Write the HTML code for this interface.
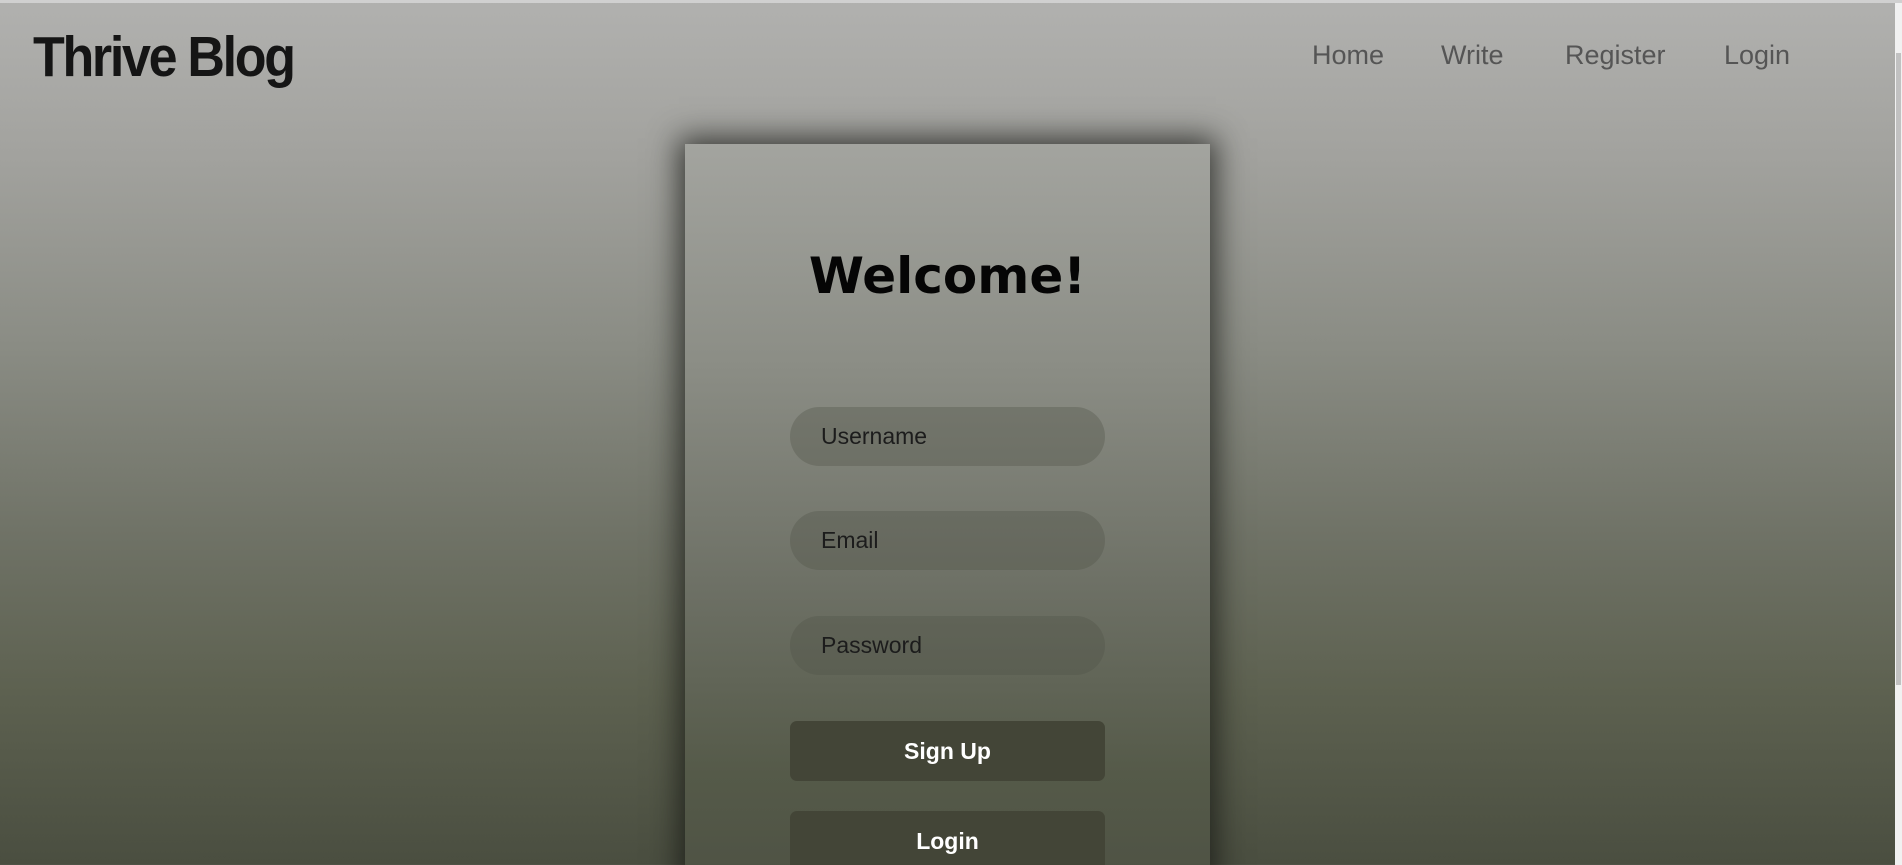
<!DOCTYPE html>
<html><head><style>
*{margin:0;padding:0;box-sizing:border-box}
html,body{width:1902px;height:865px;overflow:hidden}
body{background:linear-gradient(#b1b1af 0%,#a2a29e 18%,#8a8c84 40%,#6f7266 62%,#5d6150 80%,#4a4e40 100%);font-family:"Liberation Sans",sans-serif;position:relative}
.topline{position:absolute;left:0;top:0;width:1902px;height:3px;background:#d0d0d0}
.sb{position:absolute;right:0;top:3px;width:7px;height:862px;background:#f1f1f1}
.sb i{position:absolute;left:1px;top:50px;width:5px;height:632px;background:#c1c1c1}
.logo{position:absolute;left:33px;top:25px;font-size:52px;font-weight:bold;color:#151515;letter-spacing:-2.3px;transform:scaleY(1.08);transform-origin:top left}
.nav a{position:absolute;top:40px;font-size:27px;color:#555;text-decoration:none}
.card{position:absolute;left:685px;top:144px;width:525px;height:740px;background:linear-gradient(#a3a49f,#8b8d85 30%,#6d7065 60%,#555a49 85%,#4e5244);box-shadow:0 0 28px 6px rgba(20,22,18,.75)}
h1{position:absolute;width:525px;top:247px;text-align:center;font-family:"Comic Sans MS","DejaVu Sans",cursive;font-size:50px;font-weight:bold;color:#050505;letter-spacing:0}
.in{position:absolute;left:790px;width:315px;height:59px;border-radius:30px;background:rgba(80,82,72,.35);font-size:23px;color:#1c1c1c;padding-left:31px;line-height:59px}
.bt{position:absolute;left:790px;width:315px;height:60px;border-radius:7px;background:#434537;color:#fff;font-weight:bold;font-size:23px;text-align:center;line-height:60px}
</style></head><body>
<div class="topline"></div>
<div class="logo">Thrive Blog</div>
<div class="nav"><a style="left:1312px">Home</a><a style="left:1441px">Write</a><a style="left:1565px">Register</a><a style="left:1724px">Login</a></div>
<div class="card"></div>
<h1 style="left:685px">Welcome!</h1>
<div class="in" style="top:407px">Username</div>
<div class="in" style="top:511px">Email</div>
<div class="in" style="top:616px">Password</div>
<div class="bt" style="top:721px">Sign Up</div>
<div class="bt" style="top:811px">Login</div>
<div class="sb"><i></i></div>
</body></html>
